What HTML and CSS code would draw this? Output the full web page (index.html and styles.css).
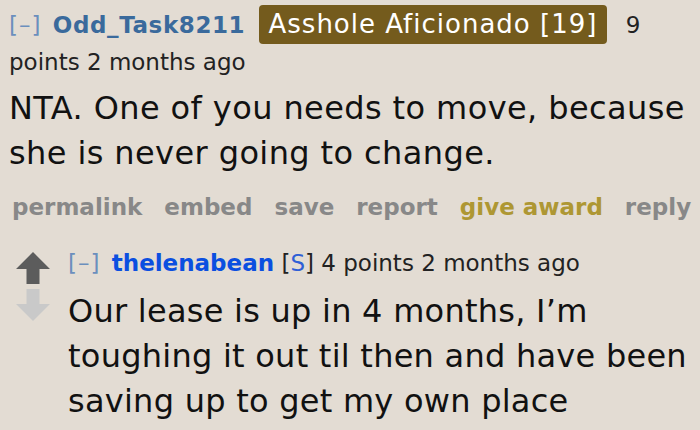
FILE: index.html
```html
<!DOCTYPE html>
<html lang="en">
<head>
  <meta charset="utf-8">
  <title>Comment thread</title>
  <link rel="stylesheet" href="styles.css">
</head>
<body>

  <div class="comment">
    <p class="tagline">
      <a class="expand">[–]</a>
      <a class="author">Odd_Task8211</a>
      <span class="flair">Asshole Aficionado [19]</span>
      <span class="score">9 points</span> <time>2 months ago</time>
    </p>
    <div class="md">
      <p>NTA. One of you needs to move, because she is never going to change.</p>
    </div>
    <ul class="buttons">
      <li><a>permalink</a></li>
      <li><a>embed</a></li>
      <li><a>save</a></li>
      <li><a>report</a></li>
      <li><a class="gild">give award</a></li>
      <li><a>reply</a></li>
    </ul>

    <div class="child">
      <div class="comment reply">
        <div class="midcol">
          <svg class="arrow up" width="34" height="32" viewBox="0 0 34 32">
            <path d="M17 0 L34 17 L23.5 17 L23.5 32 L10.5 32 L10.5 17 L0 17 Z"/>
          </svg>
          <svg class="arrow down" width="34" height="32" viewBox="0 0 34 32">
            <path d="M10.5 0 L23.5 0 L23.5 15 L34 15 L17 32 L0 15 L10.5 15 Z"/>
          </svg>
        </div>
        <div class="entry">
          <p class="tagline">
            <a class="expand">[–]</a>
            <a class="author submitter">thelenabean</a>
            <span class="op">[<a>S</a>]</span>
            <span class="score">4 points</span> <time>2 months ago</time>
          </p>
          <div class="md">
            <p>Our lease is up in 4 months, I’m toughing it out til then and have been saving up to get my own place</p>
          </div>
        </div>
      </div>
    </div>
  </div>

</body>
</html>
```

FILE: styles.css
```css
body {
  margin: 0;
  background-color: #e3dcd3;
  font-family: "DejaVu Sans", Verdana, sans-serif;
  color: #111;
}
a { text-decoration: none; }

.comment { padding: 5px 0 0 9px; }
.tagline {
  margin: 0;
  font-size: 23px;
  line-height: 36px;
  color: #222;
}
.expand { color: #6b8fbd; letter-spacing: 1px; margin-right: 4px; }
.author { color: #3a6a9c; font-weight: bold; letter-spacing: 0.6px; }
.author.submitter { color: #0b4fe0; letter-spacing: 0; }
.op a { color: #2f5fd6; }

.flair {
  display: inline-block;
  margin: 0 11px 0 6px;
  padding: 0 10px;
  line-height: 39px;
  border-radius: 4px;
  background-color: #745b1d;
  color: #fff;
  font-size: 26px;
  letter-spacing: 1px;
}

.md p {
  margin: 6px 0 0;
  font-size: 32px;
  line-height: 45px;
  letter-spacing: 0.4px;
}
.reply .md p { margin-top: 8px; letter-spacing: 0.25px; }

/* link row under the first comment */
.buttons {
  display: flex;
  gap: 22px;
  list-style: none;
  margin: 16px 0 0;
  padding: 0 0 0 3px;
  font-size: 23px;
  line-height: 30px;
  font-weight: bold;
  white-space: nowrap;
}
.buttons a { color: #888; }
.buttons a.gild { color: #ae9733; }

.child { margin-top: 23px; }
.comment.reply {
  display: flex;
  padding: 0;
}
.midcol {
  display: flex;
  flex-direction: column;
  gap: 5px;
  padding: 7px 0 0 7px;
  width: 52px;
}
.arrow.up { fill: #5c5c5c; }
.arrow.down { fill: #c9c9c9; }
.entry { flex: 1; }
```
